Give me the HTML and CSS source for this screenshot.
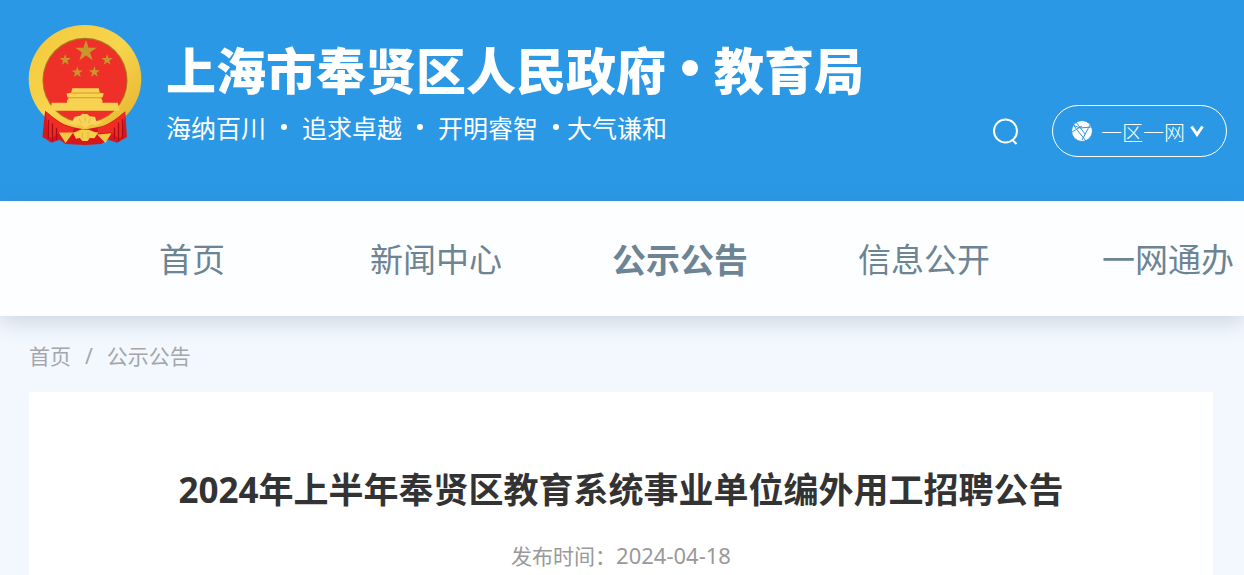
FILE: index.html
```html
<!DOCTYPE html>
<html lang="zh-CN">
<head>
<meta charset="UTF-8">
<meta name="viewport" content="width=device-width,initial-scale=1">
<title>2024年上半年奉贤区教育系统事业单位编外用工招聘公告</title>
<link rel="stylesheet" href="styles.css">
</head>
<body>
<header class="header">
  <a class="brand" href="#">
    <svg class="emblem" viewBox="40 42 340 364" aria-hidden="true">
      <defs>
        <linearGradient id="gold" x1="0" y1="0" x2="1" y2="1">
          <stop offset="0" stop-color="#f3c83d"/><stop offset=".5" stop-color="#f7d54c"/><stop offset="1" stop-color="#e5b02f"/>
        </linearGradient>
        <path id="star" d="M0-30 7-9H29L11 4 18 25 0 12-18 25-11 4-29-9H-7Z"/>
      </defs>
      <ellipse cx="210" cy="206" rx="168" ry="161" fill="url(#gold)"/>
      <circle cx="210" cy="210" r="127" fill="#a97920"/>
      <circle cx="210" cy="211" r="124" fill="#ef3029"/>
      <g fill="#c8962c">
        <use href="#star" transform="translate(213 123) scale(1.1)"/>
        <use href="#star" transform="translate(151 149) scale(.58)"/>
        <use href="#star" transform="translate(276 149) scale(.58)"/>
        <use href="#star" transform="translate(187 186) scale(.58)"/>
        <use href="#star" transform="translate(238 185) scale(.58)"/>
      </g>
      <path d="M172 234h79l3 13 12 2-4 12h-5l5 9v7h46l5 24H106l5-24h45v-7l7-9h-5l-3-12 14-2Z" fill="#f8d352"/>
      <path d="M170 248h86M161 262h100" stroke="#d79a2a" stroke-width="3"/>
      <path d="M91 301c24 18 43 40 84 49l35 7 36-7c40-8 59-28 84-48l5 77-29 17-27-9-21 13-48 3-58-3-18-13-24 9-27-17Z" fill="#d91619"/>
      <path d="M92 304c24 19 46 42 84 48l-3 17-40-4-22 18-8-4Zm238 0c-25 21-48 42-83 48l3 17 38-4 22 18 10-4Z" fill="#f12c25"/>
      <path d="M101 328v56m12-45v53m12-40v36m173-37v34m12-48v55m12-66v57" stroke="#a80d18" stroke-width="4"/>
      <path d="M132 366h43l-23 31Zm114 6 43-4-18 29Z" fill="#f3c744"/>
      <path d="m152 335 20-1 7-15 17-3 6-6 16 1 6 6 16 2 4 14 20 1-24 11-12-4-16 11-17-11-14 5Z" fill="#f8d458"/>
      <path d="M174 366c17-2 19-12 36-8 17-4 21 8 40 7l-12 18-14-1-6 9h-16l-7-9-12 2Z" fill="#f5ce4c"/>
      <path d="m192 325 8 13m10-22v18m17-11-7 15m-18 27v18m17-18v18" stroke="#e0aa36" stroke-width="2"/>
    </svg>
    <span class="brand-text">
      <span class="site-name"><span>上海市奉贤区人民政府</span><span class="dot"></span><span>教育局</span></span>
      <span class="motto"><span>海纳百川</span><span class="point"></span><span>追求卓越</span><span class="point"></span><span>开明睿智</span><span class="point last"></span><span>大气谦和</span></span>
    </span>
  </a>
  <div class="tools">
    <button class="search" type="button" aria-label="搜索">
      <svg viewBox="0 0 28 28"><circle cx="13.5" cy="14" r="11.5"/><path d="M20 22.500l4.500 4.500"/></svg>
    </button>
    <button class="network" type="button">
      <svg class="globe" viewBox="0 0 22 22"><circle cx="11" cy="11" r="10.500"/><path d="M2 5l7 3 12-1M3 6l12 15M19 5 11 20M5 2l9 12M1 12l10-6"/></svg>
      <span>一区一网</span>
      <svg class="arrow" viewBox="0 0 14 12"><path d="M1.500 1.500 7 9.500l5.500-8"/></svg>
    </button>
  </div>
</header>
<nav class="nav">
  <a href="#">首页</a>
  <a href="#">新闻中心</a>
  <a class="active" href="#">公示公告</a>
  <a href="#">信息公开</a>
  <a href="#">一网通办</a>
</nav>
<main class="main">
  <div class="crumbs"><a href="#">首页</a><span>/</span><a href="#">公示公告</a></div>
  <article class="article">
    <h1>2024年上半年奉贤区教育系统事业单位编外用工招聘公告</h1>
    <p class="date">发布时间：<time datetime="2024-04-18">2024-04-18</time></p>
  </article>
</main>
</body>
</html>
```
FILE: styles.css
```css
*{box-sizing:border-box}
body{margin:0;background:#f3f8ff;font-family:"Noto Sans","Noto Sans CJK SC",sans-serif;overflow-x:hidden}
a{color:inherit;text-decoration:none}
button{padding:0;border:0;background:none;color:inherit;font:inherit;cursor:pointer}

.header{display:flex;justify-content:space-between;align-items:flex-start;padding:24px 17px 44px 28px;background:#2b98e6;color:#fff}
.brand{display:flex;gap:24px}
.emblem{flex:none;width:114px;height:122px}
.brand-text{display:flex;flex-direction:column;gap:10px;padding-top:16px;white-space:nowrap;font-family:"Noto Sans CJK SC",sans-serif}
.site-name{display:flex;align-items:center;font-size:50px;line-height:56px;font-weight:900}
.dot{width:16px;height:16px;margin:0 16px;border-radius:50%;background:#fff}
.motto{display:flex;align-items:center;font-size:25px;line-height:42px}
.point{width:6px;height:6px;margin:0 15px;border-radius:50%;background:#fff}
.point.last{margin-right:8px}

.tools{display:flex;align-items:center;gap:32px;padding-top:81px}
.search{width:28px;height:28px}
.search svg{display:block;fill:none;stroke:#fff;stroke-width:2}
.network{display:flex;align-items:center;justify-content:center;width:175px;height:52px;padding-right:4px;border:1px solid #fff;border-radius:26px;font-size:21px;font-weight:300}
.globe{width:22px;height:22px;margin-right:8px;fill:#fff;stroke:#2b98e6;stroke-width:1}
.arrow{width:14px;height:12px;margin-left:5px;fill:none;stroke:#fff;stroke-width:3}

.nav{display:flex;height:115px;padding-left:70px;background:#fdfeff;box-shadow:0 6px 20px rgba(90,110,130,.25);color:#6d8494;font-size:33px;line-height:118px;white-space:nowrap}
.nav a{flex:0 0 244px;text-align:center}
.nav .active{font-size:34px;font-weight:700}

.main{padding:0 31px 0 29px}
.crumbs{display:flex;gap:14px;height:76px;line-height:80px;font-size:21px;color:#a3a7ac}
.article{min-height:183px;padding:72px 20px 0;background:#fff;text-align:center}
h1{margin:0;color:#333;font-size:35px;line-height:52px;font-weight:700}
.date{margin:22px 0 0;color:#999;font-size:21px;line-height:34px}
.date time{font-size:22px}
```
